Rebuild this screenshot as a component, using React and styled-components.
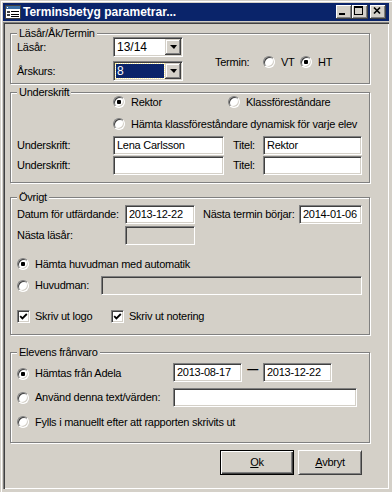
import React from 'react';
import styled, { createGlobalStyle } from 'styled-components';

const Global = createGlobalStyle`
  html, body { margin: 0; padding: 0; background: #d4d0c8; }
  body {
    font-family: "Liberation Sans", Arial, sans-serif;
    font-size: 11px;
    letter-spacing: -0.25px;
    color: #000;
  }
  * { box-sizing: border-box; }
`;

const Window = styled.div`
  width: 392px;
  height: 492px;
  background: #d4d0c8;
  padding: 3px 3px 3px 3px;
  box-shadow: inset 1px 1px 0 #d4d0c8, inset 2px 2px 0 #fff;
  display: flex;
  flex-direction: column;
  overflow: hidden;
`;

const TitleBar = styled.div`
  height: 18px;
  background: #0a246a;
  display: flex;
  align-items: center;
  padding: 0 3px 0 2px;
  flex-shrink: 0;
`;

const TitleText = styled.span`
  margin-left: 2px;
  color: #fff;
  font-weight: bold;
  font-size: 12px;
  letter-spacing: 0;
  white-space: nowrap;
`;

const TitleButtons = styled.div`
  margin-left: auto;
  display: flex;
`;

const TitleBtn = styled.div`
  width: 16px;
  height: 14px;
  margin-left: ${p => p.$gap || 0}px;
  background: #d4d0c8;
  box-shadow: inset -1px -1px 0 #404040, inset 1px 1px 0 #fff,
    inset -2px -2px 0 #808080, inset 2px 2px 0 #d4d0c8;
  svg { display: block; }
`;

const Client = styled.div`
  flex: 1;
  margin-top: 1px;
  padding: 0 0 0 7px;
  box-shadow: inset 1px 1px 0 #808080, inset 2px 2px 0 #404040,
    inset -1px -1px 0 #fff, inset -2px -2px 0 #d4d0c8;
  display: flex;
  flex-direction: column;
`;

const Group = styled.div`
  position: relative;
  width: 360px;
  height: ${p => p.$h}px;
  margin-top: ${p => p.$mt}px;
  padding: ${p => p.$pt}px 0 0 6px;
  border: 1px solid #808080;
  box-shadow: inset 1px 1px 0 #fff, 1px 1px 0 #fff;
  flex-shrink: 0;
`;

const Legend = styled.span`
  position: absolute;
  top: -7px;
  left: 6px;
  padding: 0 2px;
  line-height: 13px;
  background: #d4d0c8;
  white-space: nowrap;
`;

const Grid = styled.div`
  display: grid;
  grid-template-columns: ${p => p.$cols};
  grid-auto-rows: ${p => p.$row}px;
  row-gap: ${p => p.$gap || 0}px;
  align-items: center;
  margin-top: ${p => p.$mt || 0}px;
`;

const Line = styled.div`
  display: flex;
  align-items: ${p => p.$align || 'center'};
  height: ${p => p.$h}px;
  margin-top: ${p => p.$mt || 0}px;
  padding-left: ${p => p.$pl || 0}px;
`;

const Label = styled.span`
  white-space: nowrap;
  line-height: 13px;
  width: ${p => (p.$w ? `${p.$w}px` : 'auto')};
  flex-shrink: 0;
`;

const Sunken = styled.div`
  width: ${p => p.$w}px;
  height: ${p => p.$h || 19}px;
  background: ${p => (p.$off ? '#d4d0c8' : '#fff')};
  border: 1px solid;
  border-color: #808080 #fff #fff #808080;
  box-shadow: inset 1px 1px 0 #404040, inset -1px -1px 0 #d4d0c8;
  padding: 1px 2px 0 3px;
  line-height: 15px;
  white-space: nowrap;
  overflow: hidden;
  flex-shrink: 0;
`;

const Combo = styled.div`
  width: 70px;
  height: 20px;
  background: #fff;
  border: 1px solid;
  border-color: #808080 #fff #fff #808080;
  box-shadow: inset 1px 1px 0 #404040, inset -1px -1px 0 #d4d0c8;
  padding: 1px;
  display: flex;
`;

const ComboText = styled.div`
  flex: 1;
  margin: 1px;
  padding-left: 1px;
  line-height: 14px;
  font-size: 12px;
  letter-spacing: 0;
  color: ${p => (p.$sel ? '#fff' : '#000')};
  background: ${p => (p.$sel ? '#0a246a' : 'transparent')};
  outline: ${p => (p.$sel ? '1px dotted #fff3a0' : 'none')};
`;

const ComboBtn = styled.div`
  width: 16px;
  height: 16px;
  background: #d4d0c8;
  box-shadow: inset -1px -1px 0 #404040, inset 1px 1px 0 #d4d0c8,
    inset -2px -2px 0 #808080, inset 2px 2px 0 #fff;
  display: flex;
  align-items: center;
  justify-content: center;
  &::after {
    content: '';
    border-left: 4px solid transparent;
    border-right: 3px solid transparent;
    border-top: 4px solid #000;
    margin-left: 1px;
  }
`;

const Choice = styled.label`
  display: flex;
  align-items: center;
  gap: ${p => p.$gap || 6}px;
  width: ${p => (p.$w ? `${p.$w}px` : 'auto')};
  flex-shrink: 0;
  white-space: nowrap;
  line-height: 13px;
  padding-top: ${p => p.$pt || 0}px;
`;

const Dot = styled.span`
  position: relative;
  width: 12px;
  height: 12px;
  border-radius: 50%;
  background: #fff;
  border: 1px solid;
  border-color: #808080 #fff #fff #808080;
  box-shadow: inset 1px 1px 0 #404040, inset -1px -1px 0 #d4d0c8;
  flex-shrink: 0;
  &::after {
    content: '';
    display: ${p => (p.$on ? 'block' : 'none')};
    position: absolute;
    left: 3px;
    top: 3px;
    width: 4px;
    height: 4px;
    border-radius: 1px;
    background: #000;
  }
`;

const Box = styled.span`
  width: 13px;
  height: 13px;
  background: #fff;
  border: 1px solid;
  border-color: #808080 #fff #fff #808080;
  box-shadow: inset 1px 1px 0 #404040, inset -1px -1px 0 #d4d0c8;
  flex-shrink: 0;
  svg { display: block; margin: 1px; }
`;

const Dash = styled.span`
  width: 21px;
  text-align: center;
  line-height: 13px;
  font-weight: bold;
`;

const Footer = styled.div`
  width: 360px;
  display: flex;
  justify-content: flex-end;
  gap: 4px;
  margin-top: 7px;
  padding-right: 8px;
`;

const Button = styled.div`
  width: ${p => p.$w}px;
  height: 25px;
  display: flex;
  align-items: center;
  justify-content: center;
  border: 1px solid;
  border-color: ${p => (p.$default ? '#000' : '#fff #404040 #404040 #fff')};
  box-shadow: ${p =>
    p.$default
      ? 'inset 1px 1px 0 #fff, inset -1px -1px 0 #404040, inset -2px -2px 0 #808080'
      : 'inset 1px 1px 0 #d4d0c8, inset -1px -1px 0 #808080'};
  line-height: 13px;
  u { text-decoration: underline; text-underline-offset: 1px; }
`;

const AppIcon = () => (
  <svg width="16" height="16" viewBox="0 0 16 16" shapeRendering="crispEdges">
    <rect x="0.5" y="1.5" width="15" height="13" fill="#fff" stroke="#404040" />
    <rect x="1" y="2" width="14" height="3" fill="#3a6ea5" />
    <rect x="2" y="3" width="1" height="1" fill="#fff" />
    <rect x="2" y="7" width="3" height="2" fill="#404040" />
    <rect x="2" y="10" width="3" height="2" fill="#404040" />
    <rect x="6" y="7" width="8" height="1" fill="#000" />
    <rect x="6" y="10" width="8" height="1" fill="#000" />
    <rect x="6" y="12" width="8" height="1" fill="#000" />
  </svg>
);

const MinGlyph = () => (
  <svg width="14" height="12" viewBox="0 0 14 12" shapeRendering="crispEdges">
    <rect x="3" y="8" width="6" height="2" fill="#000" />
  </svg>
);

const MaxGlyph = () => (
  <svg width="14" height="12" viewBox="0 0 14 12" shapeRendering="crispEdges">
    <rect x="2.5" y="1.5" width="8" height="8" fill="none" stroke="#000" />
    <rect x="2" y="2" width="9" height="1" fill="#000" />
  </svg>
);

const CloseGlyph = () => (
  <svg width="14" height="12" viewBox="0 0 14 12">
    <path d="M4 2.5 L10 8.5 M10 2.5 L4 8.5" stroke="#000" strokeWidth="1.7" />
  </svg>
);

const CheckMark = () => (
  <svg width="9" height="9" viewBox="0 0 9 9">
    <path d="M1.2 4.2 L3.4 6.4 L7.8 2" fill="none" stroke="#000" strokeWidth="1.8" />
  </svg>
);

const Radio = ({ on, w, pt, children }) => (
  <Choice $w={w} $pt={pt}>
    <Dot $on={on} />
    {children}
  </Choice>
);

const Check = ({ w, children }) => (
  <Choice $w={w} $gap={5}>
    <Box><CheckMark /></Box>
    {children}
  </Choice>
);

export default function App() {
  return (
    <>
      <Global />
      <Window>
        <TitleBar>
          <AppIcon />
          <TitleText>Terminsbetyg parametrar...</TitleText>
          <TitleButtons>
            <TitleBtn><MinGlyph /></TitleBtn>
            <TitleBtn><MaxGlyph /></TitleBtn>
            <TitleBtn $gap={2}><CloseGlyph /></TitleBtn>
          </TitleButtons>
        </TitleBar>

        <Client>
          <Group $mt={11} $h={51} $pt={3}>
            <Legend>Läsår/Åk/Termin</Legend>
            <Line $h={44} $align="flex-start">
              <Grid $cols="96px 70px" $row={20} $gap={4}>
                <Label>Läsår:</Label>
                <Combo>
                  <ComboText>13/14</ComboText>
                  <ComboBtn />
                </Combo>
                <Label>Årskurs:</Label>
                <Combo>
                  <ComboText $sel>8</ComboText>
                  <ComboBtn />
                </Combo>
              </Grid>
              <Line $h={16} $mt={17} $pl={32}>
                <Label $w={48}>Termin:</Label>
                <Radio w={37}>VT</Radio>
                <Radio on>HT</Radio>
              </Line>
            </Line>
          </Group>

          <Group $mt={8} $h={91} $pt={1}>
            <Legend>Underskrift</Legend>
            <Line $h={16} $pl={96}>
              <Radio on w={115}>Rektor</Radio>
              <Radio>Klassföreståndare</Radio>
            </Line>
            <Line $h={16} $mt={6} $pl={96}>
              <Radio>Hämta klassföreståndare dynamisk för varje elev</Radio>
            </Line>
            <Grid $cols="96px 111px 9px 30px 99px" $row={19} $gap={1} $mt={4}>
              <Label>Underskrift:</Label>
              <Sunken $w={111}>Lena Carlsson</Sunken>
              <span />
              <Label>Titel:</Label>
              <Sunken $w={99}>Rektor</Sunken>
              <Label>Underskrift:</Label>
              <Sunken $w={111} />
              <span />
              <Label>Titel:</Label>
              <Sunken $w={99} />
            </Grid>
          </Group>

          <Group $mt={14} $h={138} $pt={7}>
            <Legend>Övrigt</Legend>
            <Grid $cols="108px 70px 8px 96px 63px" $row={19} $gap={2}>
              <Label>Datum för utfärdande:</Label>
              <Sunken $w={70}>2013-12-22</Sunken>
              <span />
              <Label>Nästa termin börjar:</Label>
              <Sunken $w={63}>2014-01-06</Sunken>
              <Label>Nästa läsår:</Label>
              <Sunken $w={70} $off />
            </Grid>
            <Line $h={16} $mt={11}>
              <Radio on>Hämta huvudman med automatik</Radio>
            </Line>
            <Line $h={19} $mt={4}>
              <Radio w={84}>Huvudman:</Radio>
              <Sunken $w={261} $off />
            </Line>
            <Line $h={16} $mt={13}>
              <Check w={94}>Skriv ut logo</Check>
              <Check>Skriv ut notering</Check>
            </Line>
          </Group>

          <Group $mt={17} $h={91} $pt={10}>
            <Legend>Elevens frånvaro</Legend>
            <Line $h={19} $align="flex-start">
              <Radio on w={156} pt={4}>Hämtas från Adela</Radio>
              <Sunken $w={69}>2013-08-17</Sunken>
              <Dash>—</Dash>
              <Sunken $w={69}>2013-12-22</Sunken>
            </Line>
            <Line $h={19} $mt={6}>
              <Radio w={156}>Använd denna text/värden:</Radio>
              <Sunken $w={184} />
            </Line>
            <Line $h={16} $mt={7}>
              <Radio>Fylls i manuellt efter att rapporten skrivits ut</Radio>
            </Line>
          </Group>

          <Footer>
            <Button $w={74} $default><span><u>O</u>k</span></Button>
            <Button $w={64}><span><u>A</u>vbryt</span></Button>
          </Footer>
        </Client>
      </Window>
    </>
  );
}
